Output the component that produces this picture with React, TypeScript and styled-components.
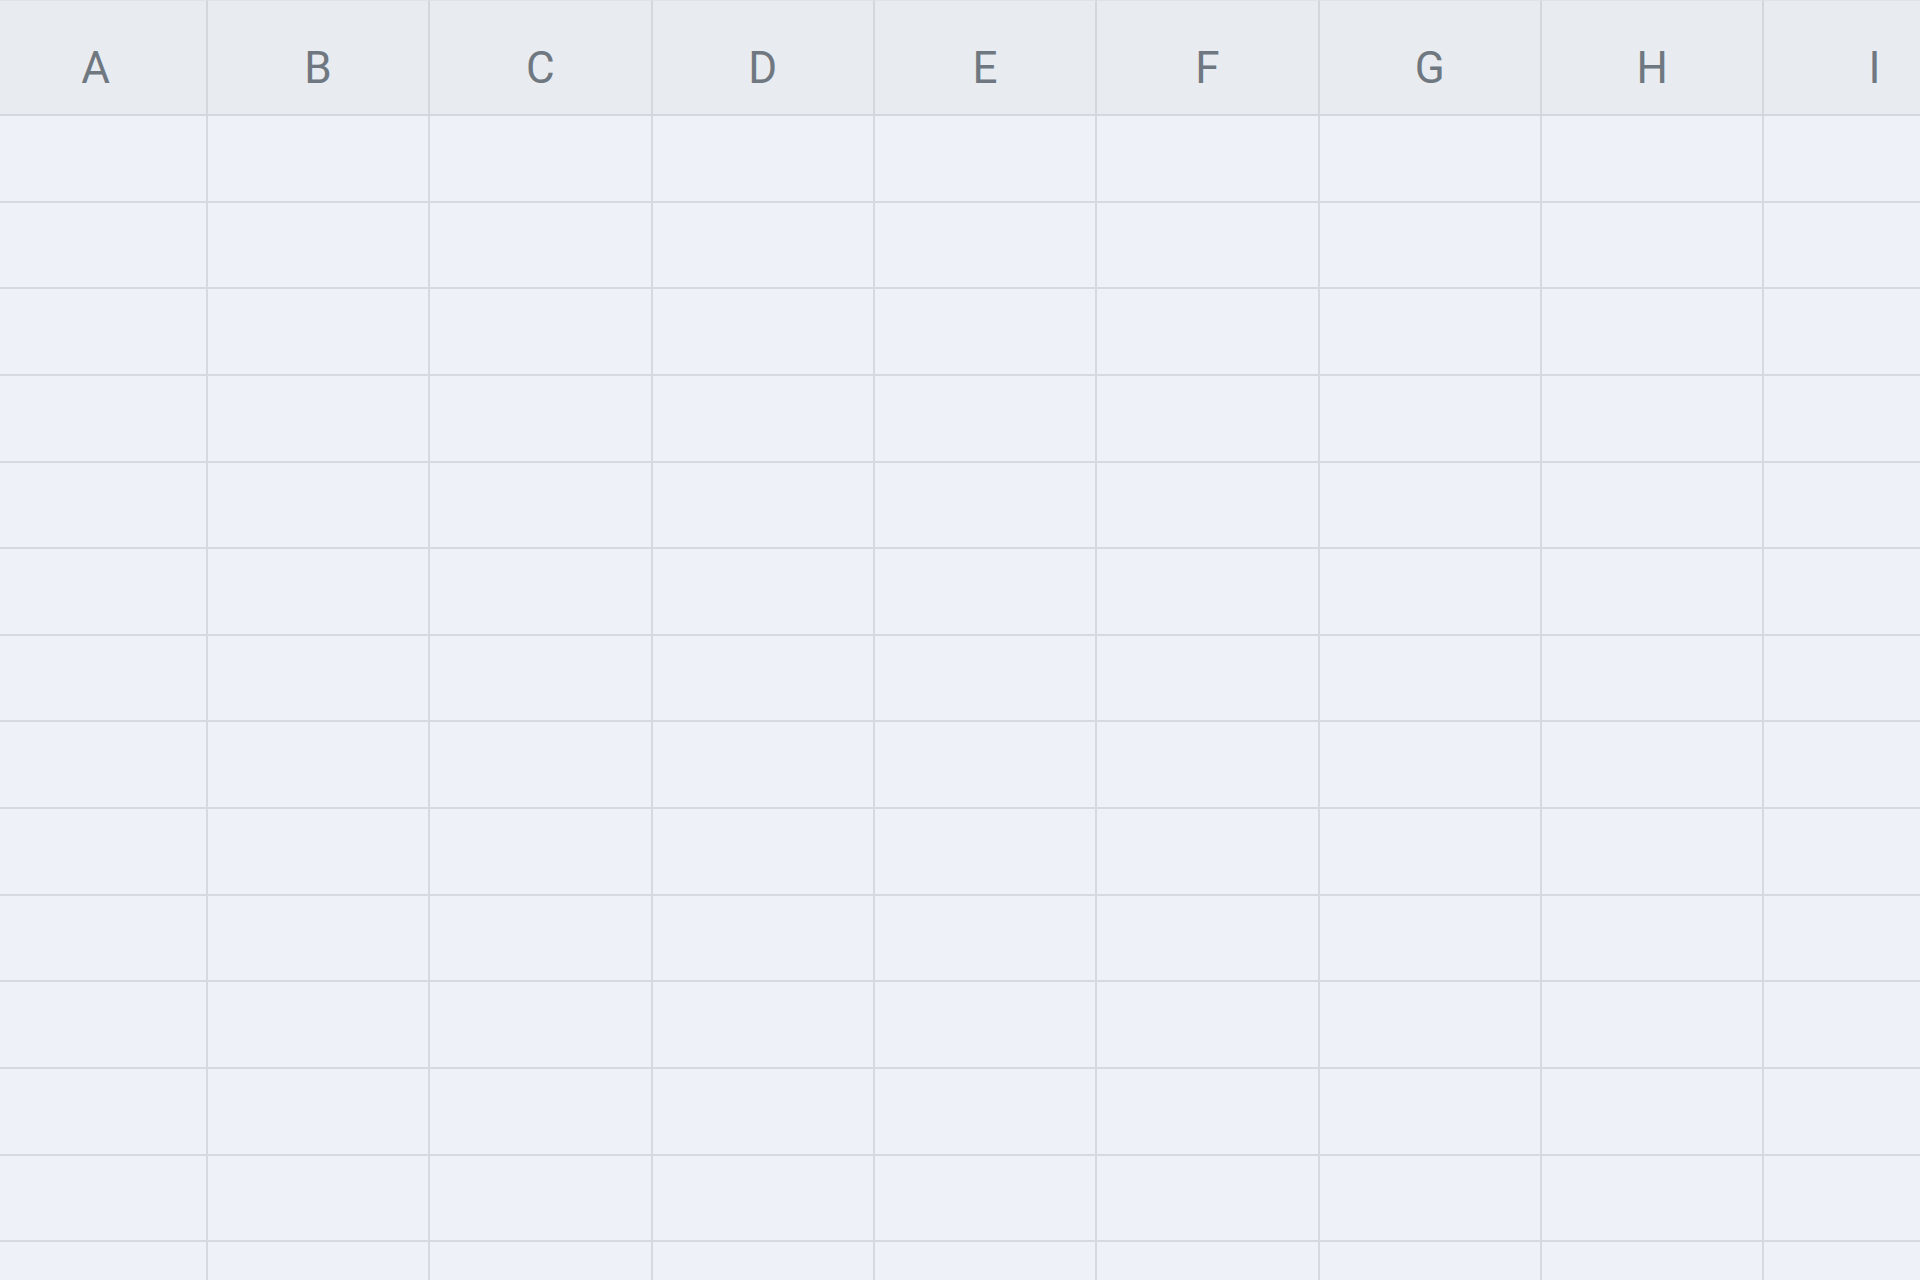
import React from "react";
import styled, { createGlobalStyle } from "styled-components";

const COLUMNS = ["A", "B", "C", "D", "E", "F", "G", "H", "I"];
const ROW_COUNT = 14;

const GlobalStyle = createGlobalStyle`
  html, body {
    margin: 0;
    padding: 0;
    background: #eef1f7;
    overflow: hidden;
  }
`;

const Page = styled.div`
  width: 1920px;
  height: 1280px;
  overflow: hidden;
  background: #eef1f7;
`;

const Sheet = styled.div`
  display: grid;
  grid-template-columns: repeat(9, 222.36px);
  grid-template-rows: 116px repeat(${ROW_COUNT}, 86.65px);
  margin-left: -14.5px;
  width: max-content;
`;

const HeaderCell = styled.div`
  box-sizing: border-box;
  display: flex;
  align-items: center;
  justify-content: center;
  padding-top: 21px;
  background: #e8ebf0;
  border-right: 2px solid #d3d7de;
  border-bottom: 2px solid #d3d7de;
  border-top: 1px solid #dfe3e8;
  font-family: Roboto, "Noto Sans", sans-serif;
  font-size: 44px;
  font-weight: 400;
  color: #6f7880;
`;

const Cell = styled.div`
  box-sizing: border-box;
  background: #eef1f7;
  border-right: 2px solid #d5d9e0;
  border-bottom: 2px solid #d5d9e0;
`;

const App = () => {
  return (
    <Page>
      <GlobalStyle />
      <Sheet>
        {COLUMNS.map((col) => (
          <HeaderCell key={col}>{col}</HeaderCell>
        ))}
        {Array.from({ length: ROW_COUNT }).map((_, r) =>
          COLUMNS.map((col) => <Cell key={`${col}${r}`} />)
        )}
      </Sheet>
    </Page>
  );
};

export default App;
